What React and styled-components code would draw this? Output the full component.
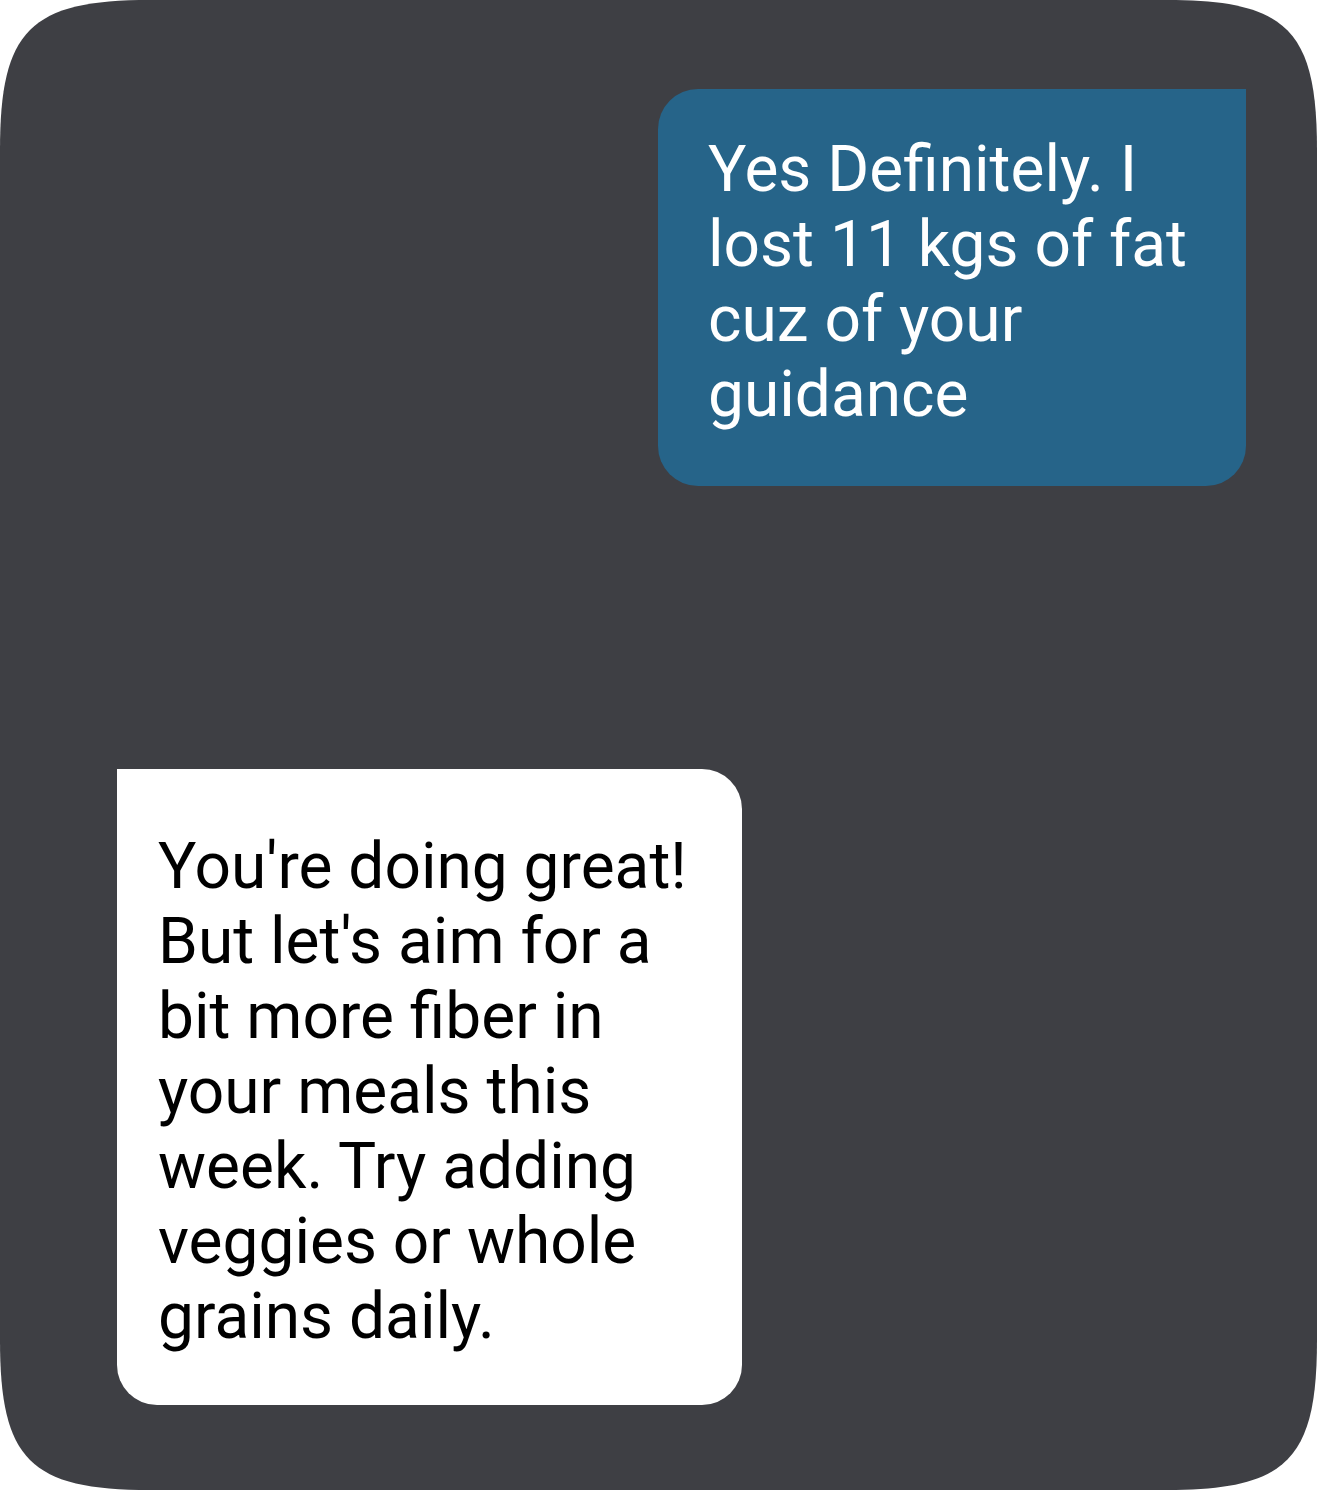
import React from "react";
import styled, { createGlobalStyle } from "styled-components";

const Global = createGlobalStyle`
  html, body { margin: 0; padding: 0; background: #ffffff; }
  body { font-family: Roboto, "Noto Sans", "Liberation Sans", sans-serif; }
`;

const Screen = styled.div`
  width: 1317px;
  height: 1490px;
  box-sizing: border-box;
  background: #3e3f44;
  clip-path: path('M 0 150 C 0 30 30 0 150 0 L 1167 0 C 1287 0 1317 30 1317 150 L 1317 1340 C 1317 1460 1287 1490 1167 1490 L 150 1490 C 30 1490 0 1460 0 1340 Z');
  display: flex;
  flex-direction: column;
  gap: 283px;
  padding: 89px 71px 0 117px;
`;

const Bubble = styled.div`
  box-sizing: border-box;
  width: ${(p) => (p.$mine ? "588px" : "625px")};
  align-self: ${(p) => (p.$mine ? "flex-end" : "flex-start")};
  background: ${(p) => (p.$mine ? "#266489" : "#ffffff")};
  color: ${(p) => (p.$mine ? "#ffffff" : "#000000")};
  padding: ${(p) => (p.$mine ? "43px 50px 54px 50px" : "60px 41px 51px 41px")};
  border-radius: ${(p) => (p.$mine ? "40px 0 40px 40px" : "0 40px 40px 40px")};
  font-family: Roboto, "Noto Sans", "Liberation Sans", sans-serif;
  font-size: 64px;
  line-height: 75px;
  font-weight: 400;
`;

export default function App() {
  return (
    <>
      <Global />
      <Screen>
        <Bubble $mine>Yes Definitely. I lost 11 kgs of fat cuz of your guidance</Bubble>
        <Bubble>
          You're doing great! But let's aim for a bit more fiber in your meals this week. Try adding veggies or whole grains daily.
        </Bubble>
      </Screen>
    </>
  );
}
